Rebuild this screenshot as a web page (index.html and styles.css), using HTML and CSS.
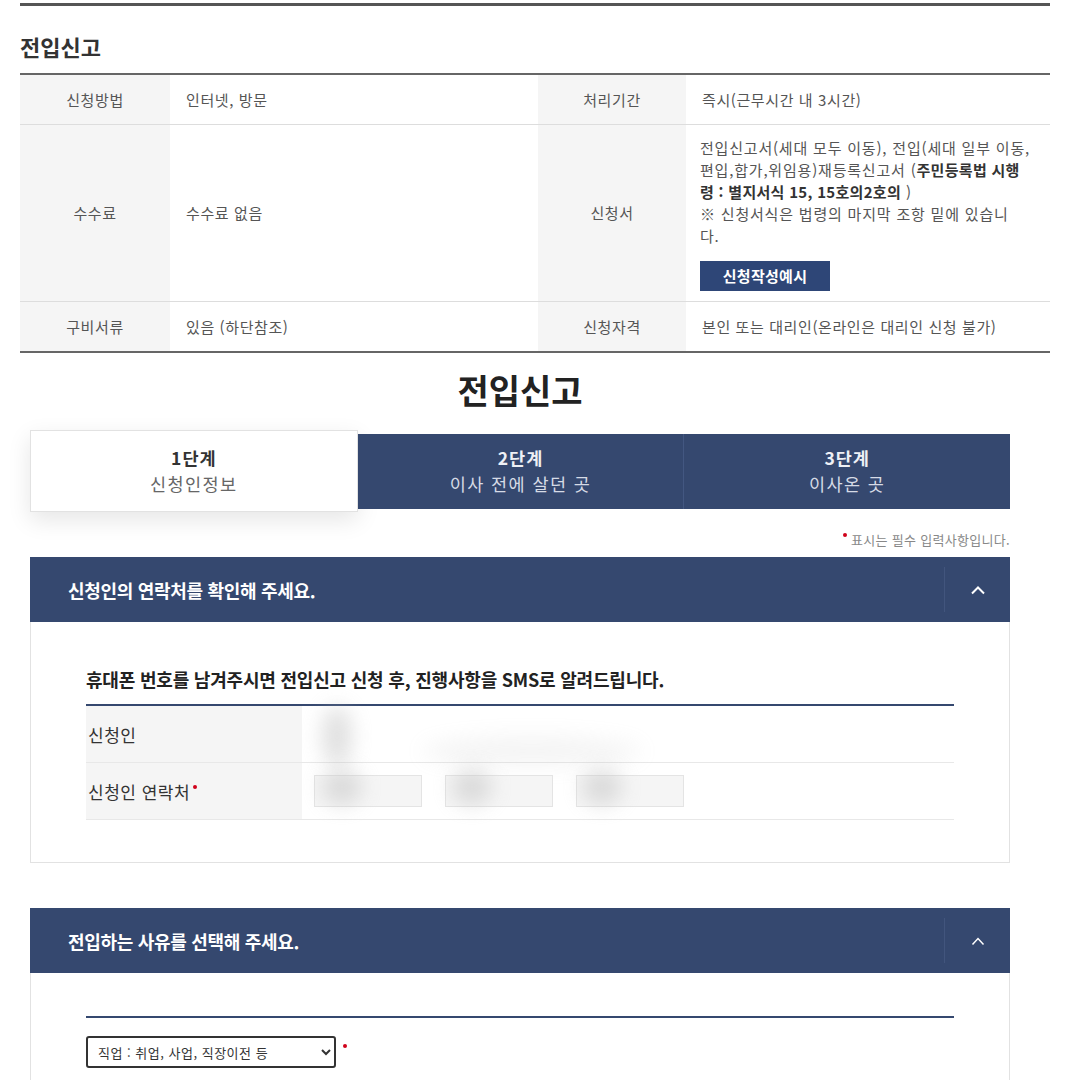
FILE: index.html
```html
<!DOCTYPE html>
<html lang="ko">
<head>
    <meta charset="utf-8">
    <title>전입신고</title>
    <link rel="stylesheet" href="styles.css">
</head>
<body>
    <div class="guide">
        <h2 class="guide-title">전입신고</h2>

        <table class="info-table">
            <colgroup>
                <col class="col-label">
                <col class="col-value-left">
                <col class="col-label-right">
                <col>
            </colgroup>
            <tr>
                <th>신청방법</th>
                <td>인터넷, 방문</td>
                <th>처리기간</th>
                <td>즉시(근무시간 내 3시간)</td>
            </tr>
            <tr>
                <th>수수료</th>
                <td>수수료 없음</td>
                <th>신청서</th>
                <td class="form-cell">
                    전입신고서(세대 모두 이동), 전입(세대 일부 이동,<br>
                    편입,합가,위임용)재등록신고서 (<b>주민등록법 시행<br>
                    령 : 별지서식 15, 15호의2호의</b> )<br>
                    ※ 신청서식은 법령의 마지막 조항 밑에 있습니<br>
                    다.<br>
                    <a class="btn-sample" href="#">신청작성예시</a>
                </td>
            </tr>
            <tr>
                <th>구비서류</th>
                <td>있음 (하단참조)</td>
                <th>신청자격</th>
                <td>본인 또는 대리인(온라인은 대리인 신청 불가)</td>
            </tr>
        </table>
    </div>

    <div class="apply">
        <h1 class="apply-title">전입신고</h1>

        <ol class="steps">
            <li class="step active">
                <strong>1단계</strong>
                <span>신청인정보</span>
            </li>
            <li class="step">
                <strong>2단계</strong>
                <span>이사 전에 살던 곳</span>
            </li>
            <li class="step">
                <strong>3단계</strong>
                <span>이사온 곳</span>
            </li>
        </ol>

        <p class="required-note"><i class="dot"></i> 표시는 필수 입력사항입니다.</p>

        <section class="panel">
            <div class="panel-head">
                <h3>신청인의 연락처를 확인해 주세요.</h3>
                <button class="toggle" type="button" aria-label="접기">
                    <svg width="16" height="10" viewBox="0 0 16 10"><polyline points="2,8.5 8,2.5 14,8.5" fill="none" stroke="#fff" stroke-width="2"/></svg>
                </button>
            </div>
            <div class="panel-body">
                <p class="panel-lead">휴대폰 번호를 남겨주시면 전입신고 신청 후, 진행사항을 SMS로 알려드립니다.</p>
                <table class="form-table">
                    <tr>
                        <th>신청인</th>
                        <td class="masked">
                            <span class="blur b1"></span>
                            <span class="blur b2"></span>
                        </td>
                    </tr>
                    <tr>
                        <th>신청인 연락처<i class="dot sup"></i></th>
                        <td class="masked">
                            <div class="phone">
                                <input type="text">
                                <input type="text">
                                <input type="text">
                            </div>
                            <span class="blur b3"></span>
                            <span class="blur b4"></span>
                            <span class="blur b5"></span>
                        </td>
                    </tr>
                </table>
            </div>
        </section>

        <section class="panel">
            <div class="panel-head">
                <h3>전입하는 사유를 선택해 주세요.</h3>
                <button class="toggle" type="button" aria-label="접기">
                    <svg width="16" height="10" viewBox="0 0 16 10"><polyline points="2.5,8.5 8,2.5 13.5,8.5" fill="none" stroke="#fff" stroke-width="1.5"/></svg>
                </button>
            </div>
            <div class="panel-body">
                <div class="reason">
                    <select>
                        <option>직업 : 취업, 사업, 직장이전 등</option>
                    </select>
                    <i class="dot sup"></i>
                </div>
            </div>
        </section>
    </div>
</body>
</html>
```

FILE: styles.css
```css
body {
    margin: 0;
    padding: 0;
    background: #fff;
    font-family: "Noto Sans CJK KR", "Noto Sans", sans-serif;
    color: #555;
    width: 1080px;
}

/* 상단 안내표 */
.guide {
    margin: 3px 30px 0 20px;
    border-top: 3px solid #555;
}

.guide-title {
    margin: 26px 0 13px;
    font-size: 22px;
    line-height: 28px;
    font-weight: 700;
    color: #333;
}

.info-table {
    width: 100%;
    border-collapse: collapse;
    border-top: 2px solid #666;
    border-bottom: 2px solid #666;
    font-size: 15px;
    letter-spacing: 0.6px;
}

.col-label { width: 150px; }
.col-value-left { width: 368px; }
.col-label-right { width: 148px; }

.info-table th,
.info-table td {
    height: 49px;
    padding: 0 14px;
    border-bottom: 1px solid #ddd;
    line-height: 22px;
    vertical-align: middle;
    text-align: left;
}

.info-table th {
    background: #f5f5f5;
    font-weight: 400;
    color: #555;
    text-align: center;
}

.info-table td {
    padding-left: 16px;
}

.info-table td.form-cell {
    padding: 12px 0 10px 14px;
    white-space: nowrap;
    letter-spacing: 0.8px;
}

.form-cell b {
    color: #333;
    letter-spacing: 0.3px;
}

.btn-sample {
    display: inline-block;
    margin-top: 14px;
    width: 130px;
    height: 30px;
    line-height: 30px;
    background: #2e4677;
    color: #fff;
    font-size: 15px;
    font-weight: 700;
    letter-spacing: 0.3px;
    text-align: center;
    text-decoration: none;
}

/* 신청 화면 */
.apply {
    margin: 0 70px 0 30px;
}

.apply-title {
    margin: 15px 0 18px;
    text-align: center;
    font-size: 34px;
    line-height: 44px;
    font-weight: 700;
    color: #222;
}

.steps {
    display: flex;
    align-items: center;
    margin: 0;
    padding: 0;
    list-style: none;
}

.step {
    flex: 1;
    height: 75px;
    display: flex;
    flex-direction: column;
    justify-content: center;
    align-items: center;
    background: #35486f;
    color: #d6dbe6;
    font-size: 17.5px;
    line-height: 26px;
    letter-spacing: 1.4px;
}

.step + .step {
    border-left: 1px solid #435781;
}

.step strong {
    color: #eef0f5;
    letter-spacing: 1px;
}

.step.active {
    height: 80px;
    background: #fff;
    border: 1px solid #e2e2e2;
    box-shadow: 0 8px 22px rgba(0, 0, 0, 0.1);
    color: #666;
}

.step.active strong {
    color: #333;
}

.step.active + .step {
    border-left: none;
}

.required-note {
    margin: 20px 0 9px;
    text-align: right;
    font-size: 13px;
    line-height: 16px;
    color: #888;
    letter-spacing: 0.3px;
}

.dot {
    display: inline-block;
    width: 4px;
    height: 4px;
    border-radius: 50%;
    background: #d0021b;
    vertical-align: 8px;
}

.dot.sup {
    margin-left: 3px;
    vertical-align: 10px;
}

.panel + .panel {
    margin-top: 45px;
}

.panel-head {
    display: flex;
    align-items: center;
    height: 65px;
    background: #35486f;
}

.panel-head h3 {
    flex: 1;
    margin: 0;
    padding-left: 38px;
    font-size: 18px;
    font-weight: 700;
    color: #fff;
    letter-spacing: -0.3px;
}

.toggle {
    width: 66px;
    height: 45px;
    padding: 0;
    border: none;
    border-left: 1px solid #42557d;
    background: transparent;
    display: flex;
    align-items: center;
    justify-content: center;
}

.panel-body {
    padding: 45px 55px 42px;
    border: 1px solid #e2e2e2;
    border-top: none;
}

.panel-lead {
    margin: 0 0 13px;
    font-size: 18px;
    line-height: 24px;
    font-weight: 700;
    color: #222;
    letter-spacing: -0.2px;
}

.form-table {
    width: 100%;
    border-collapse: collapse;
    border-top: 2px solid #35486f;
    font-size: 17px;
    letter-spacing: 0.5px;
}

.form-table th,
.form-table td {
    height: 56px;
    border-bottom: 1px solid #e8e8e8;
    padding: 0;
}

.form-table th {
    width: 214px;
    padding-left: 2px;
    background: #f5f5f5;
    font-weight: 400;
    color: #333;
    text-align: left;
}

.form-table td {
    padding-left: 12px;
}

.masked {
    position: relative;
}

.phone {
    display: flex;
    gap: 23px;
}

.phone input {
    width: 108px;
    height: 32px;
    box-sizing: border-box;
    border: 1px solid #e4e4e4;
    background: #f5f5f5;
}

/* 개인정보 가림 처리 */
.blur {
    position: absolute;
    background: #bbb;
    border-radius: 50%;
    filter: blur(10px);
    opacity: 0.45;
}

.b1 { left: 20px; top: 0; width: 30px; height: 60px; }
.b2 { left: 120px; top: 30px; width: 220px; height: 30px; opacity: 0.15; }
.b3 { left: 20px; top: 6px; width: 40px; height: 36px; }
.b4 { left: 150px; top: 6px; width: 40px; height: 36px; }
.b5 { left: 280px; top: 6px; width: 40px; height: 36px; }

.panel:last-child .panel-body {
    padding-top: 43px;
    padding-bottom: 30px;
}

.reason {
    border-top: 2px solid #35486f;
    padding-top: 18px;
}

.reason select {
    width: 250px;
    height: 32px;
    padding: 0 6px;
    border: 2px solid #333;
    border-radius: 3px;
    background: #fff;
    font-family: "Noto Sans CJK KR", sans-serif;
    font-size: 13px;
    letter-spacing: 0.5px;
    color: #333;
}
```
